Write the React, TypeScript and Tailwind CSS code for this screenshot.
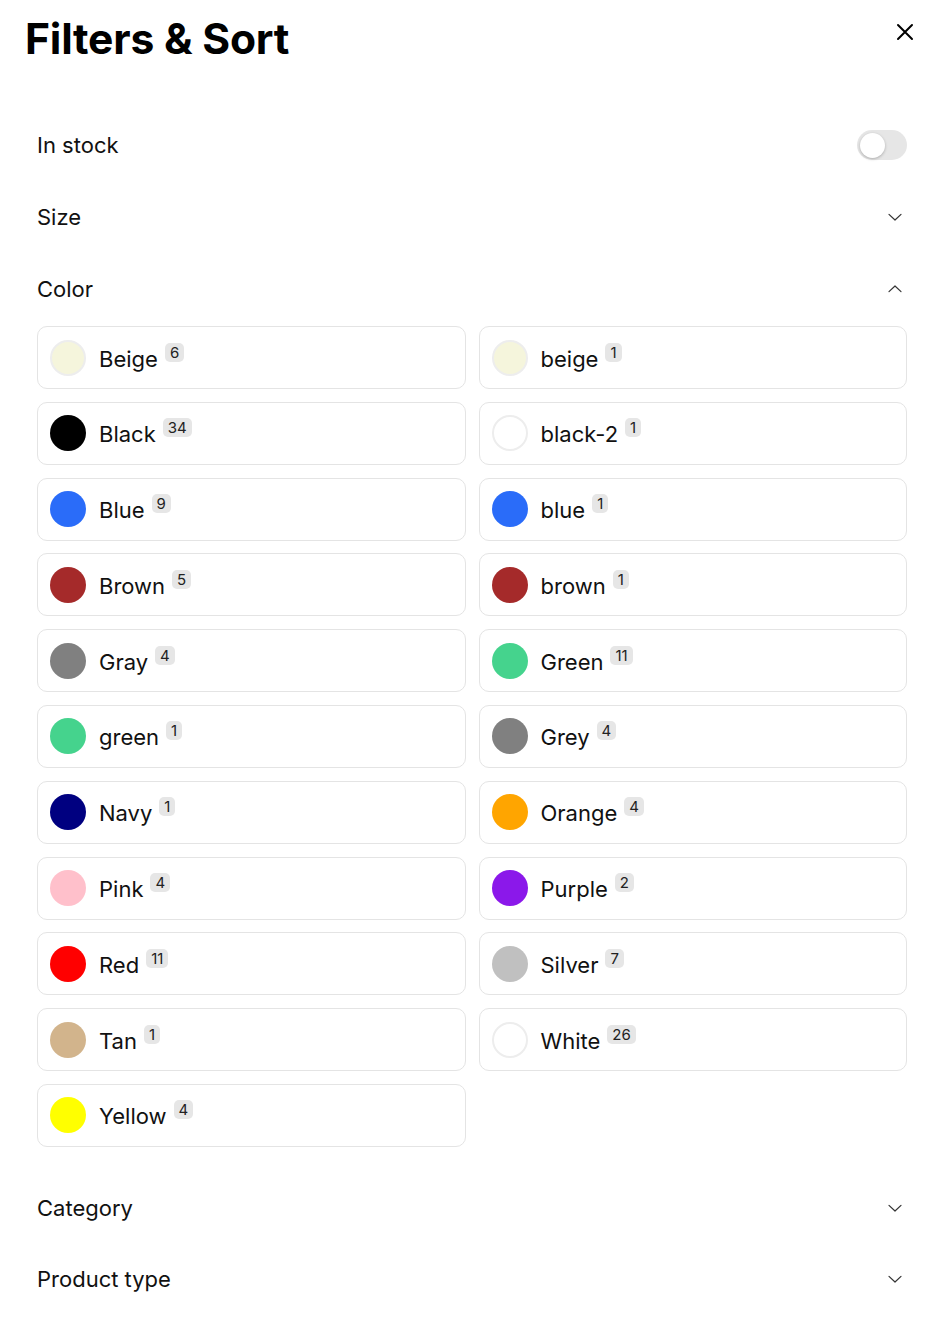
import React from "react";

type Swatch = { name: string; count: number; color: string; ring?: boolean };

const colors: Swatch[] = [
  { name: "Beige", count: 6, color: "#f5f5dc", ring: true },
  { name: "beige", count: 1, color: "#f5f5dc", ring: true },
  { name: "Black", count: 34, color: "#000000" },
  { name: "black-2", count: 1, color: "#ffffff", ring: true },
  { name: "Blue", count: 9, color: "#2a6cf9" },
  { name: "blue", count: 1, color: "#2a6cf9" },
  { name: "Brown", count: 5, color: "#a52a2a" },
  { name: "brown", count: 1, color: "#a52a2a" },
  { name: "Gray", count: 4, color: "#808080" },
  { name: "Green", count: 11, color: "#45d38d" },
  { name: "green", count: 1, color: "#45d38d" },
  { name: "Grey", count: 4, color: "#808080" },
  { name: "Navy", count: 1, color: "#000080" },
  { name: "Orange", count: 4, color: "#ffa500" },
  { name: "Pink", count: 4, color: "#ffc0cb" },
  { name: "Purple", count: 2, color: "#8b18ea" },
  { name: "Red", count: 11, color: "#ff0000" },
  { name: "Silver", count: 7, color: "#c0c0c0" },
  { name: "Tan", count: 1, color: "#d2b48c" },
  { name: "White", count: 26, color: "#ffffff", ring: true },
  { name: "Yellow", count: 4, color: "#ffff00" },
];

function Chevron({ up }: { up?: boolean }) {
  return (
    <svg width="18" height="18" viewBox="0 0 24 24" fill="none" stroke="#333" strokeWidth="1.6" strokeLinecap="round" strokeLinejoin="round">
      {up ? <path d="M4 15.5l8-7.5 8 7.5" /> : <path d="M4 8.5l8 7.5 8-7.5" />}
    </svg>
  );
}

function Row({ label, children, h = "h-[72px]" }: { label: string; children: React.ReactNode; h?: string }) {
  return (
    <div className={"flex items-center justify-between " + h}>
      <span className="text-[22px] text-[#111]">{label}</span>
      <div className="flex items-center justify-center">{children}</div>
    </div>
  );
}

export default function App() {
  return (
    <div className="min-h-screen bg-white text-black" style={{ fontFamily: "Inter, 'Noto Sans', sans-serif" }}>
      {/* Header */}
      <div className="flex items-start justify-between pl-[25px] pr-[24px] pt-[14px]">
        <h1 className="text-[42.6px] font-bold leading-[50px] tracking-[-0.2px]">Filters &amp; Sort</h1>
        <button className="mt-[9px] p-0">
          <svg width="18" height="18" viewBox="0 0 18 18" fill="none" stroke="#000" strokeWidth="2" strokeLinecap="round">
            <path d="M2 2l14 14M16 2L2 16" />
          </svg>
        </button>
      </div>

      <div className="pl-[37px] pr-[31px] pt-[45px]">
        <Row label="In stock">
          <div className="w-[50px] h-[30px] rounded-full bg-[#e6e6e6] p-[3px] flex items-center">
            <div className="w-[25px] h-[25px] rounded-full bg-white shadow-[0_1px_3px_rgba(0,0,0,0.25)]" />
          </div>
        </Row>
        <div className="pr-[3px]">
          <Row label="Size">
            <Chevron />
          </Row>
          <Row label="Color">
            <Chevron up />
          </Row>
        </div>

        <div className="grid grid-cols-2 gap-x-[13px] gap-y-[12.8px] mt-[1px]">
          {colors.map((c) => (
            <div
              key={c.name}
              className="flex items-center h-[63px] rounded-[10px] border border-[#e4e4e4] px-[12px] gap-[13px]"
            >
              <span
                className={
                  "w-[36px] h-[36px] rounded-full shrink-0 " +
                  (c.ring ? "border-2 border-[#ededed]" : "")
                }
                style={{ backgroundColor: c.color }}
              />
              <span className="flex items-start gap-[7px]">
                <span className="text-[22px] leading-[30px] text-[#111] pt-[2px]">{c.name}</span>
                <span className="text-[15px] leading-[19px] px-[5px] rounded-[5px] bg-[#e6e6e6] text-[#222] mt-[1px]">
                  {c.count}
                </span>
              </span>
            </div>
          ))}
        </div>

        <div className="mt-[26px] pr-[3px]">
          <Row label="Category" h="h-[71px]">
            <Chevron />
          </Row>
          <Row label="Product type" h="h-[71px]">
            <Chevron />
          </Row>
        </div>
      </div>
    </div>
  );
}
